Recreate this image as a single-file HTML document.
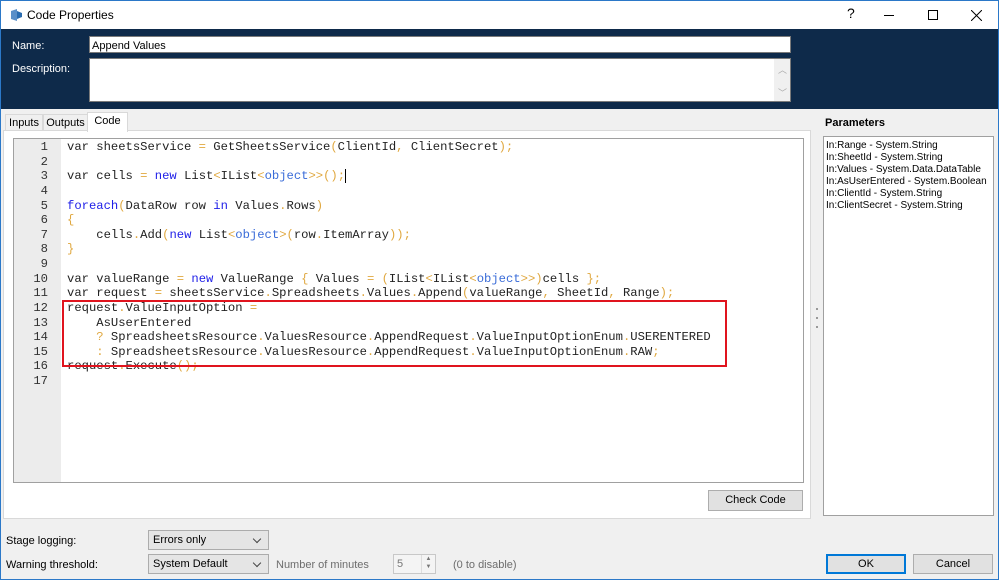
<!DOCTYPE html>
<html><head><meta charset="utf-8"><style>
*{box-sizing:border-box;margin:0;padding:0}
body{width:999px;height:580px;background:#f0f0f0;font-family:"Liberation Sans",sans-serif;font-size:11px;color:#000;position:relative;overflow:hidden}
.a{position:absolute}
.win{left:0;top:0;width:999px;height:580px;border:1px solid #2b78c8}
.title{left:1px;top:1px;width:997px;height:28px;background:#fff}
.navy{left:1px;top:29px;width:997px;height:80px;background:#0e2a4a}
.lbl{color:#fff;font-size:11px}
.inp{background:#fff;border:1px solid #7a7a7a}
.code{font-family:"Liberation Mono",monospace;font-size:12.2px;line-height:14.63px;color:#222;white-space:pre}
.k{color:#2020e8}.o{color:#3a6cd8}.p{color:#e0a840}
.gut{font-family:"Liberation Mono",monospace;font-size:12.2px;line-height:14.63px;color:#333;text-align:right;white-space:pre}
.btn{background:#e1e1e1;border:1px solid #adadad;text-align:center;font-size:11px;line-height:17px}
.combo{background:#e5e5e5;border:1px solid #acacac;font-size:11px;line-height:19px;padding-left:4px}
.combo:after{content:"";position:absolute;right:8px;top:5px;width:5px;height:5px;border-right:1px solid #444;border-bottom:1px solid #444;transform:rotate(45deg)}
</style></head><body>
<div class="a win"></div>
<div class="a title"></div>
<svg class="a" style="left:9px;top:8px" width="14" height="14" viewBox="0 0 14 14"><path d="M2 3 L8 1 L8 13 L2 11Z" fill="#5a8fc8"/><path d="M8 3 L13 5 L13 9 L8 11Z" fill="#2a6cb0"/></svg>
<div class="a" style="left:27px;top:8px;font-size:12px">Code Properties</div>
<div class="a" style="left:847px;top:5px;font-size:14px">?</div>
<div class="a" style="left:884px;top:15px;width:10px;height:1px;background:#000"></div>
<div class="a" style="left:928px;top:10px;width:10px;height:10px;border:1px solid #000"></div>
<svg class="a" style="left:971px;top:10px" width="11" height="11"><path d="M0 0L11 11M11 0L0 11" stroke="#000" stroke-width="1"/></svg>
<div class="a navy"></div>
<div class="a lbl" style="left:12px;top:40px">Name:</div>
<div class="a lbl" style="left:12px;top:63px">Description:</div>
<div class="a inp" style="left:89px;top:36px;width:702px;height:17px;padding-left:2px;font-size:11px;line-height:16px;padding-top:1px">Append Values</div>
<div class="a inp" style="left:89px;top:58px;width:702px;height:44px"></div>
<div class="a" style="left:774px;top:59px;width:16px;height:42px;background:#f0f0f0"></div>
<div class="a" style="left:778px;top:63px;font-size:9px;color:#aaa">︿</div>
<div class="a" style="left:778px;top:86px;font-size:9px;color:#aaa">﹀</div>
<div class="a" style="left:5px;top:114px;width:38px;height:17px;background:#f0f0f0;border:1px solid #d9d9d9;border-bottom:none;font-size:11px;text-align:center;line-height:17px">Inputs</div>
<div class="a" style="left:43px;top:114px;width:45px;height:17px;background:#f0f0f0;border:1px solid #d9d9d9;border-bottom:none;font-size:11px;text-align:center;line-height:17px">Outputs</div>
<div class="a" style="left:87px;top:112px;width:41px;height:20px;background:#fff;border:1px solid #d9d9d9;border-bottom:none;font-size:11px;text-align:center;line-height:17px;z-index:2">Code</div>
<div class="a" style="left:3px;top:130px;width:808px;height:389px;background:#fff;border:1px solid #d9d9d9"></div>
<div class="a" style="left:13px;top:138px;width:791px;height:345px;background:#fff;border:1px solid #a0a0a0"></div>
<div class="a" style="left:14px;top:139px;width:47px;height:343px;background:#ececec"></div>
<div class="a gut" style="left:14px;top:140px;width:34px">1
2
3
4
5
6
7
8
9
10
11
12
13
14
15
16
17</div>
<div class="a code" style="left:67px;top:140px">var sheetsService <span class="p">=</span> GetSheetsService<span class="p">(</span>ClientId<span class="p">,</span> ClientSecret<span class="p">);</span>

var cells <span class="p">=</span> <span class="k">new</span> List<span class="p">&lt;</span>IList<span class="p">&lt;</span><span class="o">object</span><span class="p">&gt;&gt;();</span><span style="border-left:1px solid #000"></span>

<span class="k">foreach</span><span class="p">(</span>DataRow row <span class="k">in</span> Values<span class="p">.</span>Rows<span class="p">)</span>
<span class="p">{</span>
    cells<span class="p">.</span>Add<span class="p">(</span><span class="k">new</span> List<span class="p">&lt;</span><span class="o">object</span><span class="p">&gt;(</span>row<span class="p">.</span>ItemArray<span class="p">));</span>
<span class="p">}</span>

var valueRange <span class="p">=</span> <span class="k">new</span> ValueRange <span class="p">{</span> Values <span class="p">=</span> <span class="p">(</span>IList<span class="p">&lt;</span>IList<span class="p">&lt;</span><span class="o">object</span><span class="p">&gt;&gt;)</span>cells <span class="p">};</span>
var request <span class="p">=</span> sheetsService<span class="p">.</span>Spreadsheets<span class="p">.</span>Values<span class="p">.</span>Append<span class="p">(</span>valueRange<span class="p">,</span> SheetId<span class="p">,</span> Range<span class="p">);</span>
request<span class="p">.</span>ValueInputOption <span class="p">=</span>
    AsUserEntered
    <span class="p">?</span> SpreadsheetsResource<span class="p">.</span>ValuesResource<span class="p">.</span>AppendRequest<span class="p">.</span>ValueInputOptionEnum<span class="p">.</span>USERENTERED
    <span class="p">:</span> SpreadsheetsResource<span class="p">.</span>ValuesResource<span class="p">.</span>AppendRequest<span class="p">.</span>ValueInputOptionEnum<span class="p">.</span>RAW<span class="p">;</span>
request<span class="p">.</span>Execute<span class="p">();</span>
</div>
<div class="a" style="left:62px;top:300px;width:665px;height:67px;border:2px solid #e0141e"></div>
<div class="a btn" style="left:708px;top:490px;width:95px;height:21px;line-height:19px">Check Code</div>
<div class="a" style="left:816px;top:308px;width:2px;height:2px;background:#999"></div>
<div class="a" style="left:816px;top:317px;width:2px;height:2px;background:#999"></div>
<div class="a" style="left:816px;top:326px;width:2px;height:2px;background:#999"></div>
<div class="a" style="left:825px;top:117px;font-weight:bold;font-size:11px">Parameters</div>
<div class="a" style="left:823px;top:136px;width:171px;height:380px;background:#fff;border:1px solid #a0a0a0;padding:3px 2px;font-size:10px;line-height:12px">In:Range - System.String<br>In:SheetId - System.String<br>In:Values - System.Data.DataTable<br>In:AsUserEntered - System.Boolean<br>In:ClientId - System.String<br>In:ClientSecret - System.String</div>
<div class="a" style="left:6px;top:535px">Stage logging:</div>
<div class="a" style="left:6px;top:559px">Warning threshold:</div>
<div class="a combo" style="left:148px;top:530px;width:121px;height:20px">Errors only</div>
<div class="a combo" style="left:148px;top:554px;width:121px;height:20px">System Default</div>
<div class="a" style="left:276px;top:559px;color:#6d6d6d">Number of minutes</div>
<div class="a" style="left:393px;top:554px;width:43px;height:20px;background:#f4f4f4;border:1px solid #c8c8c8;color:#777;padding-left:3px;line-height:18px">5</div>
<div class="a" style="left:421px;top:555px;width:14px;height:18px;border-left:1px solid #ddd;font-size:6px;color:#777;text-align:center;line-height:8px">▲<br>▼</div>
<div class="a" style="left:453px;top:559px;color:#6d6d6d">(0 to disable)</div>
<div class="a btn" style="left:826px;top:554px;width:80px;height:20px;border:2px solid #0078d7;line-height:16px">OK</div>
<div class="a btn" style="left:913px;top:554px;width:80px;height:20px;line-height:18px">Cancel</div>
</body></html>
